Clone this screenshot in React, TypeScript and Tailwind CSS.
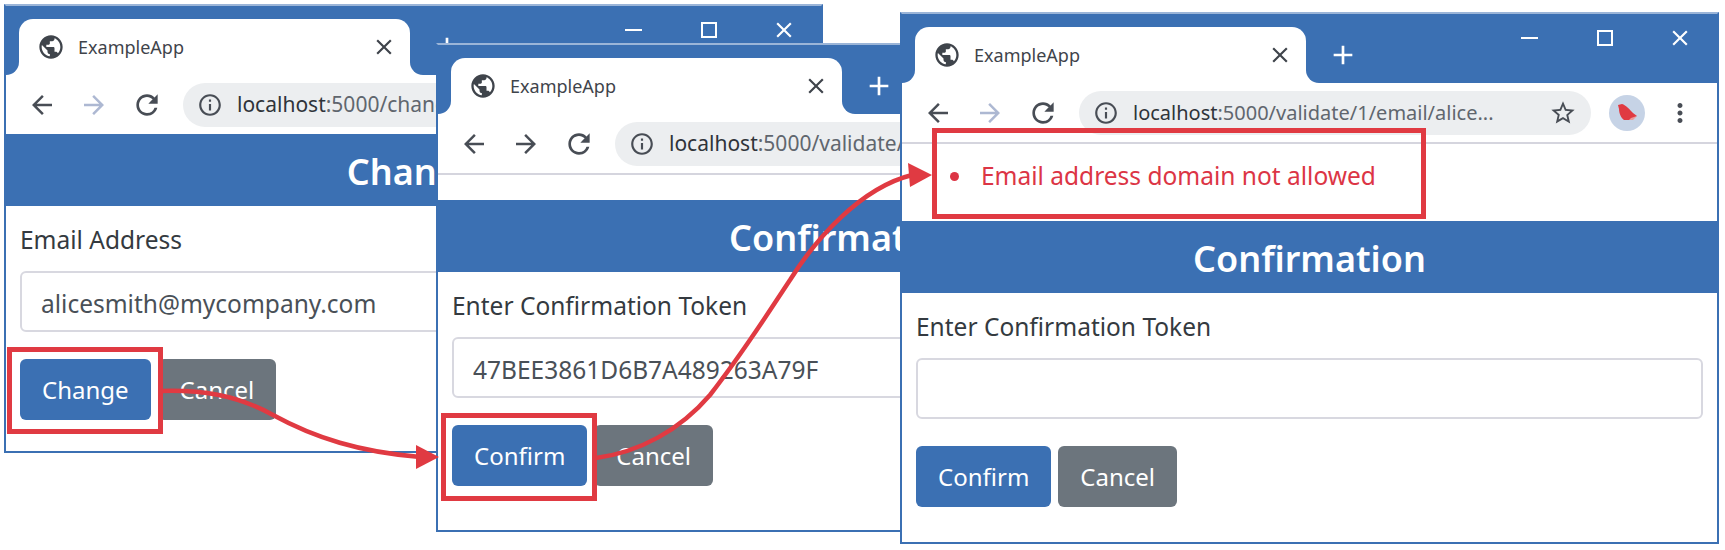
import { MdPublic, MdArrowBack, MdArrowForward, MdRefresh, MdInfoOutline, MdStarBorder, MdMoreVert, MdClose, MdAdd } from 'react-icons/md';

type BrowserProps = {
  className: string;
  urlPath: string;
  urlSize: string;
  forwardOff?: boolean;
  full?: boolean;
  notice?: React.ReactNode;
  title: string;
  label: string;
  value: string;
  action: string;
};

function Field({ label, value }: { label: string; value: string }) {
  return (
    <>
      <label className="block h-[36px] text-[24.5px] leading-[36px] text-[#343a40]">{label}</label>
      <input
        readOnly
        value={value}
        className="mt-[13px] block h-[61px] w-full rounded-[6px] border-2 border-[#d8d8e0] bg-white px-[19px] pt-[3px] text-[24.5px] text-[#495057] outline-none"
      />
    </>
  );
}

function Browser({ className, urlPath, urlSize, forwardOff, full, notice, title, label, value, action }: BrowserProps) {
  return (
    <div className={`absolute flex flex-col overflow-hidden border-x-2 border-b-2 border-t-2 border-[#3b70b3] border-t-[#9bb5d8] bg-white ${className}`}>
      {/* Title bar */}
      <div className="flex h-[69px] shrink-0 items-start bg-[#3b70b3] text-white">
        <div className="relative ml-[13px] mt-[13px] flex h-[56px] w-[391px] items-center rounded-t-[14px] bg-white pl-[18px] pr-[13px] text-[#3f444b]">
          <div className="absolute -left-[13px] bottom-0 h-[13px] w-[13px] bg-white">
            <div className="h-full w-full rounded-br-[13px] bg-[#3b70b3]" />
          </div>
          <div className="absolute -right-[13px] bottom-0 h-[13px] w-[13px] bg-white">
            <div className="h-full w-full rounded-bl-[13px] bg-[#3b70b3]" />
          </div>
          <MdPublic className="h-[28px] w-[28px] shrink-0" />
          <span className="ml-[13px] flex-1 text-[18px]">ExampleApp</span>
          <MdClose className="h-[26px] w-[26px] shrink-0" />
        </div>
        <MdAdd className="ml-[21px] mt-[25px] h-[32px] w-[32px]" />
        <div className="ml-auto flex items-center">
          <div className="flex h-[48px] w-[75px] items-center justify-center">
            <div className="h-[2px] w-[17px] bg-white" />
          </div>
          <div className="flex h-[48px] w-[75px] items-center justify-center">
            <div className="h-[16px] w-[16px] border-2 border-white" />
          </div>
          <div className="flex h-[48px] w-[75px] items-center justify-center">
            <MdClose className="h-[26px] w-[26px]" />
          </div>
        </div>
      </div>

      {/* Toolbar */}
      <div className="flex h-[59px] shrink-0 items-center bg-white pl-[21px] text-[#484d55]">
        <MdArrowBack className="h-[30px] w-[30px] shrink-0" />
        <MdArrowForward className={`ml-[22px] h-[30px] w-[30px] shrink-0 ${forwardOff ? 'text-[#adb8d2]' : ''}`} />
        <MdRefresh className="ml-[22px] h-[32px] w-[32px] shrink-0" />
        <div className="ml-[20px] flex h-[44px] w-[512px] shrink-0 items-center rounded-full bg-[#eceef0] pl-[14px] pr-[14px]">
          <MdInfoOutline className="h-[26px] w-[26px] shrink-0" />
          <span className={`ml-[14px] flex-1 whitespace-nowrap text-[#60666e] ${urlSize}`}>
            <span className="text-[#2f343a]">localhost</span>
            {urlPath}
          </span>
          {full && <MdStarBorder className="h-[28px] w-[28px] shrink-0" />}
        </div>
        {full && (
          <>
            <div className="ml-[18px] h-[36px] w-[36px] shrink-0 rounded-full bg-[#c6d3e6]">
              <svg viewBox="0 0 36 36" className="h-[36px] w-[36px]">
                <path d="M15 25 L24 25 L28 21 L22 22 Z" fill="#ec9a9a" />
                <path d="M9 10 L13 9 C17 10 21 15 24 18 L28 21 L22 23 L20 25 L15 25 C12 23 10 18 10 14 Z" fill="#e03a42" />
              </svg>
            </div>
            <MdMoreVert className="ml-[20px] h-[30px] w-[30px] shrink-0" />
          </>
        )}
      </div>
      {notice}

      {/* Page */}
      <div className="flex h-[72px] shrink-0 items-center justify-center bg-[#3b70b3] pt-[4px] text-[36px] font-semibold whitespace-nowrap text-white">
        {title}
      </div>
      <div className="px-[14px] pt-[16px]">
        <Field label={label} value={value} />
        <div className="mt-[27px] flex gap-[7px]">
          <button className="h-[61px] rounded-[6px] bg-[#3b70b3] px-[22px] text-[24px] text-white">{action}</button>
          <button className="h-[61px] rounded-[6px] bg-[#6c757d] px-[22px] text-[24px] text-white">Cancel</button>
        </div>
      </div>
    </div>
  );
}

export default function App() {
  return (
    <div className="relative h-[550px] w-[1725px] overflow-hidden bg-white font-['Noto_Sans',sans-serif]">
      <Browser
        className="left-[4px] top-[4px] h-[449px] w-[819px]"
        urlPath=":5000/change"
        urlSize="text-[21px]"
        forwardOff
        title="Change"
        label="Email Address"
        value="alicesmith@mycompany.com"
        action="Change"
      />
      <Browser
        className="left-[436px] top-[43px] h-[489px] w-[819px]"
        urlPath=":5000/validate/1/email/alice..."
        urlSize="text-[21px]"
        notice={<div className="h-[27px] shrink-0 border-t-2 border-[#d5d5de]" />}
        title="Confirmation"
        label="Enter Confirmation Token"
        value="47BEE3861D6B7A489263A79F"
        action="Confirm"
      />
      <Browser
        className="left-[900px] top-[12px] h-[532px] w-[819px]"
        urlPath=":5000/validate/1/email/alice..."
        urlSize="text-[20px]"
        forwardOff
        full
        notice={
          <div className="flex h-[79px] shrink-0 items-center border-t-2 border-[#d5d5de] pb-[12px] pl-[48px] text-[24.5px] text-[#dc3545]">
            <span className="h-[9px] w-[9px] rounded-full bg-[#dc3545]" />
            <span className="ml-[22px]">Email address domain not allowed</span>
          </div>
        }
        title="Confirmation"
        label="Enter Confirmation Token"
        value=""
        action="Confirm"
      />

      {/* Callout boxes and arrows */}
      <div className="absolute left-[7px] top-[347px] h-[87px] w-[156px] border-[5px] border-[#e03a42]" />
      <div className="absolute left-[441px] top-[413px] h-[88px] w-[156px] border-[5px] border-[#e03a42]" />
      <div className="absolute left-[932px] top-[128px] h-[91px] w-[494px] border-[5px] border-[#e03a42]" />
      <svg viewBox="0 0 1725 550" className="pointer-events-none absolute left-0 top-0 h-[550px] w-[1725px]">
        <path d="M162 391 C200 390 235 394 273 415 C315 438 360 452 420 457" fill="none" stroke="#e03a42" strokeWidth="4.5" />
        <polygon points="416,445 439,457 416,469" fill="#e03a42" />
        <path d="M596 458 C640 452 680 430 710 395 C745 350 770 310 790 280 C815 240 860 188 912 175" fill="none" stroke="#e03a42" strokeWidth="4.5" />
        <polygon points="908,163 932,175 910,187" fill="#e03a42" />
      </svg>
    </div>
  );
}
